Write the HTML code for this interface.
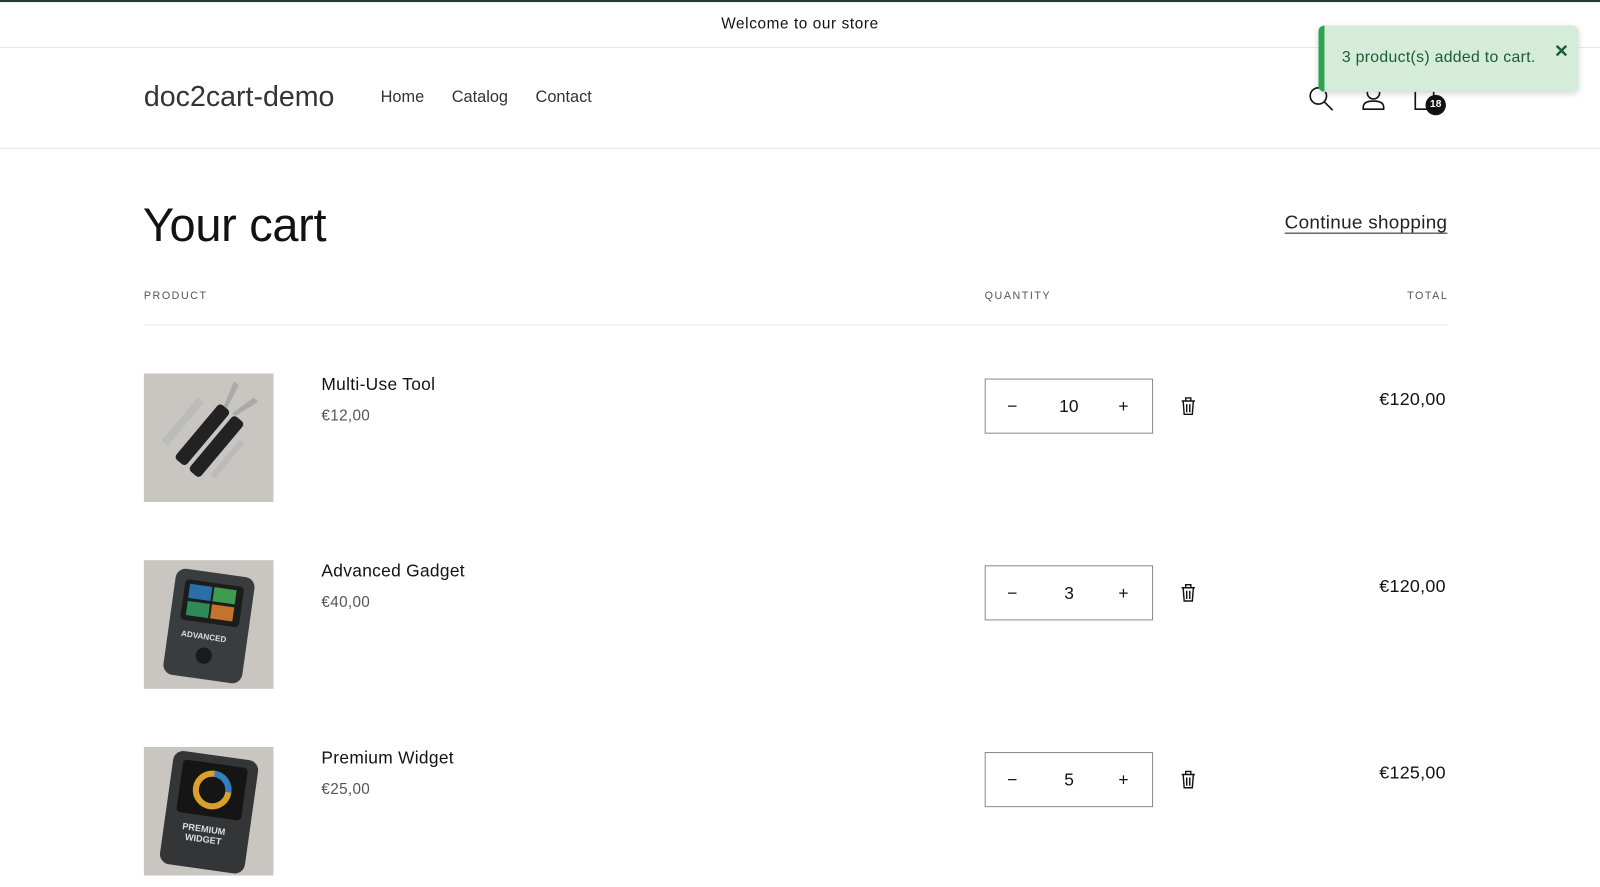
<!DOCTYPE html>
<html><head><meta charset="utf-8"><style>
*{margin:0;padding:0;box-sizing:border-box}
html,body{width:1600px;height:887px;overflow:hidden;background:#fff}
#w{width:1568px;height:869px;transform:scale(1.0204);transform-origin:0 0;position:relative;font-family:"Liberation Sans",sans-serif;color:#121212}
.topbar{height:2px;background:#22382c}
.ann{height:45px;border-bottom:1px solid #e8e8e8;text-align:center;font-size:15px;letter-spacing:.6px;line-height:44px}
.hdr{height:99px;border-bottom:1px solid #e8e8e8;position:relative}
.logo{position:absolute;left:141px;top:32px;font-size:28px;color:#333}
.nav{position:absolute;left:373px;top:40px;font-size:16px;color:#333}
.nav span{margin-right:27px}
.icons svg{position:absolute}
.badge{position:absolute;left:1397px;top:93px;width:20px;height:20px;border-radius:50%;background:#121212;color:#fff;font-size:10px;text-align:center;line-height:20px;font-weight:bold}
h1{position:absolute;left:140px;top:193px;font-size:46px;font-weight:normal;letter-spacing:-.3px}
.cont{position:absolute;left:1259px;top:207px;font-size:18.5px;letter-spacing:.3px;text-decoration:underline;text-underline-offset:4px;color:#222}
.th{position:absolute;top:284px;font-size:10.5px;letter-spacing:1.5px;color:#555}
.line{position:absolute;left:141px;top:318px;width:1277px;height:1px;background:#e5e5e5}
.img{position:absolute;left:141px;width:127px;height:126px;background:#c9c6c2;overflow:hidden}
.name{position:absolute;left:315px;font-size:17px;letter-spacing:.3px}
.price{position:absolute;left:315px;font-size:15px;color:#555;letter-spacing:.3px}
.qty{position:absolute;left:965px;width:165px;height:54px;border:1px solid #8a8a8a;font-size:17px}
.qty span{position:absolute;top:17px}
.trash{position:absolute;left:1157px}
.tot{position:absolute;right:151px;font-size:17.5px;letter-spacing:.3px}
.toast{position:absolute;left:1292px;top:25px;width:255px;height:65px;background:#d4ecd9;border-left:6px solid #2ea44f;border-radius:6px;box-shadow:0 2px 6px rgba(0,0,0,.15);color:#1e5b31;font-size:15.5px;letter-spacing:.3px}
.toast .t{position:absolute;left:17px;top:23px}
.toast .x{position:absolute;left:225px;top:16px;font-weight:bold;font-size:17px}
</style></head><body><div id="w">
<div class="topbar"></div>
<div class="ann">Welcome to our store</div>
<div class="hdr">
<div class="logo">doc2cart-demo</div>
<div class="nav"><span>Home</span><span>Catalog</span><span>Contact</span></div>
</div>
<div class="icons">
<svg style="left:1282px;top:84px" width="26" height="26" viewBox="0 0 26 26" fill="none" stroke="#121212" stroke-width="1.6"><circle cx="10" cy="10" r="8"/><path d="M16 16l8 8"/></svg>
<svg style="left:1334px;top:83px" width="24" height="26" viewBox="0 0 24 26" fill="none" stroke="#121212" stroke-width="1.6"><circle cx="12" cy="8" r="6"/><path d="M2 24v-2q0-6 10-6t10 6v2z"/></svg>
<svg style="left:1384px;top:83px" width="24" height="26" viewBox="0 0 24 26" fill="none" stroke="#121212" stroke-width="1.6"><path d="M3 6h18v18H3z"/><path d="M8 6V5a4 4 0 018 0v1"/></svg>
</div>
<div class="badge">18</div>
<h1>Your cart</h1>
<div class="cont">Continue shopping</div>
<div class="th" style="left:141px">PRODUCT</div>
<div class="th" style="left:965px">QUANTITY</div>
<div class="th" style="left:1379px">TOTAL</div>
<div class="line"></div>

<div class="img" style="top:366px"><svg width="127" height="126"><g transform="rotate(40 64 63)"><rect x="50" y="30" width="14" height="70" rx="4" fill="#222"/><rect x="68" y="30" width="14" height="70" rx="4" fill="#222"/><path d="M55 30l-8-25 6 0 6 25zM70 30l8-25-6 0-6 25z" fill="#aaa"/><rect x="30" y="40" width="8" height="55" fill="#bbb"/><rect x="88" y="45" width="6" height="45" fill="#bbb"/></g></svg></div>
<div class="name" style="top:367px">Multi-Use Tool</div>
<div class="price" style="top:399px">€12,00</div>
<div class="qty" style="top:371px"><span style="left:21px">−</span><span style="left:72px">10</span><span style="left:130px">+</span></div>
<svg class="trash" style="top:389px" width="15" height="18" viewBox="0 0 15 18" fill="none" stroke="#121212" stroke-width="1.4"><path d="M1 4h13M5 4V1h5v3M2.5 4l1 13h8l1-13M6 7v8M9 7v8"/></svg>
<div class="tot" style="top:381px">€120,00</div>

<div class="img" style="top:549px"><svg width="127" height="126"><g transform="rotate(8 64 63)"><rect x="25" y="12" width="78" height="105" rx="10" fill="#3a3d40"/><rect x="35" y="22" width="58" height="40" rx="4" fill="#1c1c1c"/><rect x="40" y="26" width="22" height="14" fill="#2a6fa8"/><rect x="64" y="26" width="22" height="14" fill="#3f9b4e"/><rect x="40" y="43" width="22" height="14" fill="#2e8b57"/><rect x="64" y="43" width="22" height="14" fill="#c4732e"/><circle cx="63" cy="94" r="8" fill="#1a1a1a"/><text x="38" y="78" font-size="8" fill="#ddd" font-family="Liberation Sans" font-weight="bold">ADVANCED</text></g></svg></div>
<div class="name" style="top:550px">Advanced Gadget</div>
<div class="price" style="top:582px">€40,00</div>
<div class="qty" style="top:554px"><span style="left:21px">−</span><span style="left:77px">3</span><span style="left:130px">+</span></div>
<svg class="trash" style="top:572px" width="15" height="18" viewBox="0 0 15 18" fill="none" stroke="#121212" stroke-width="1.4"><path d="M1 4h13M5 4V1h5v3M2.5 4l1 13h8l1-13M6 7v8M9 7v8"/></svg>
<div class="tot" style="top:564px">€120,00</div>

<div class="img" style="top:732px"><svg width="127" height="126"><g transform="rotate(8 64 63)"><rect x="22" y="8" width="84" height="112" rx="10" fill="#333536"/><rect x="32" y="16" width="64" height="52" rx="4" fill="#151515"/><circle cx="64" cy="42" r="16" fill="none" stroke="#d9a12a" stroke-width="6"/><path d="M64 26a16 16 0 0116 16" fill="none" stroke="#2e7fc4" stroke-width="6"/><text x="40" y="84" font-size="9" fill="#ddd" font-family="Liberation Sans" font-weight="bold">PREMIUM</text><text x="44" y="94" font-size="9" fill="#ddd" font-family="Liberation Sans" font-weight="bold">WIDGET</text></g></svg></div>
<div class="name" style="top:733px">Premium Widget</div>
<div class="price" style="top:765px">€25,00</div>
<div class="qty" style="top:737px"><span style="left:21px">−</span><span style="left:77px">5</span><span style="left:130px">+</span></div>
<svg class="trash" style="top:755px" width="15" height="18" viewBox="0 0 15 18" fill="none" stroke="#121212" stroke-width="1.4"><path d="M1 4h13M5 4V1h5v3M2.5 4l1 13h8l1-13M6 7v8M9 7v8"/></svg>
<div class="tot" style="top:747px">€125,00</div>

<div class="toast"><div class="t">3 product(s) added to cart.</div><div class="x">✕</div></div>
</div></body></html>
